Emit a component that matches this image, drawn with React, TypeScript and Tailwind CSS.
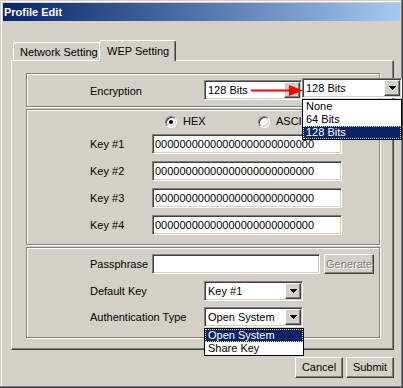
import React from "react";

const field =
  "bg-white border border-t-[#808080] border-l-[#808080] border-r-white border-b-white shadow-[inset_1px_1px_0_#404040,inset_-1px_-1px_0_#d4d0c8]";
const raised =
  "bg-[#d4d0c8] border border-t-white border-l-white border-r-[#404040] border-b-[#404040] shadow-[inset_-1px_-1px_0_#808080]";
const group =
  "border border-[#808080] shadow-[1px_1px_0_#fff,inset_1px_1px_0_#fff]";

function Arrow() {
  return (
    <svg width="7" height="4" viewBox="0 0 7 4" shapeRendering="crispEdges">
      <path d="M0 0h7v1H0z M1 1h5v1H1z M2 2h3v1H2z M3 3h1v1H3z" fill="#000" />
    </svg>
  );
}

function Select({ value, className }: { value: string; className: string }) {
  return (
    <div className={`${field} flex items-center h-[20px] ${className}`}>
      <span className="flex-1 pl-[3px] leading-none whitespace-nowrap">{value}</span>
      <div className={`${raised} w-[16px] h-[16px] mr-[1px] flex items-center justify-center`}>
        <Arrow />
      </div>
    </div>
  );
}

function Radio({ checked, label }: { checked?: boolean; label: string }) {
  return (
    <div className="flex items-center gap-[6px]">
      <div className="w-[12px] h-[12px] rounded-full bg-white border border-t-[#808080] border-l-[#808080] border-r-white border-b-white shadow-[inset_1px_1px_0_#404040,inset_-1px_-1px_0_#d4d0c8] flex items-center justify-center">
        {checked && <div className="w-[4px] h-[4px] rounded-full bg-black" />}
      </div>
      <span className="leading-none">{label}</span>
    </div>
  );
}

function ListItem({ text, active }: { text: string; active?: boolean }) {
  return (
    <div
      className={
        active
          ? "h-[13px] leading-[11px] pl-[2px] bg-[#0a246a] text-white border border-dotted border-[#e8e8a0]"
          : "h-[13px] leading-[13px] pl-[3px]"
      }
    >
      {text}
    </div>
  );
}

const keys = ["Key #1", "Key #2", "Key #3", "Key #4"];

export default function App() {
  return (
    <div className="relative w-[403px] h-[388px] bg-[#d4d0c8] flex flex-col font-['Liberation_Sans',Arial,sans-serif] text-[11px] text-black shadow-[inset_-1px_-1px_0_#404040,inset_-2px_-2px_0_#808080,inset_1px_1px_0_#d4d0c8,inset_2px_2px_0_#fff] overflow-hidden">
      {/* title bar */}
      <div className="mt-[3px] ml-[3px] w-[397px] h-[18px] bg-linear-to-r from-[#0a246a] to-[#a6caf0] flex items-center pl-[1px] text-white font-bold">
        Profile Edit
      </div>

      {/* tabs */}
      <div className="mt-[19px] ml-[13px] h-[21px] flex items-end">
        <div className="w-[87px] h-[18px] mb-[1px] border-t border-l border-white rounded-tl-[3px] flex items-center pl-[6px] pt-[1px] leading-none">
          Network Setting
        </div>
        <div className="relative z-10 -ml-[1px] w-[77px] h-[21px] bg-[#d4d0c8] border-t border-l border-white border-r border-r-[#404040] shadow-[inset_-1px_0_0_#808080] rounded-t-[3px] flex items-start pt-[5px] pl-[7px] leading-none">
          WEP Setting
        </div>
      </div>

      {/* panel */}
      <div className="-mt-[1px] ml-[11px] w-[383px] h-[290px] border border-t-white border-l-white border-r-[#404040] border-b-[#404040] shadow-[inset_-1px_-1px_0_#808080] pt-[12px] pl-[14px]">
        <div className={`${group} w-[354px] h-[34px] flex items-center pl-[63px]`}>
          <span className="w-[114px] leading-none pt-[3px]">Encryption</span>
          <Select value="128 Bits" className="w-[98px]" />
        </div>

        <div className={`${group} mt-[2px] w-[354px] h-[136px] pt-[4px]`}>
          <div className="h-[14px] flex items-center pl-[138px] pt-[1px]">
            <div className="w-[93px]">
              <Radio checked label="HEX" />
            </div>
            <Radio label="ASCII" />
          </div>
          <div className="mt-[6px] flex flex-col gap-[7px]">
            {keys.map((k) => (
              <div key={k} className="flex items-center pl-[63px] h-[20px]">
                <span className="w-[62px] leading-none">{k}</span>
                <div className={`${field} w-[190px] h-[20px] flex items-center pl-[2px] leading-none`}>
                  00000000000000000000000000
                </div>
              </div>
            ))}
          </div>
        </div>

        <div className={`${group} mt-[2px] w-[354px] h-[91px] pt-[6px] pl-[63px]`}>
          <div className="flex items-center h-[20px]">
            <span className="w-[62px] leading-none">Passphrase</span>
            <div className={`${field} w-[168px] h-[20px]`} />
            <div className={`${raised} ml-[4px] w-[50px] h-[20px] flex items-center justify-center text-[#808080] [text-shadow:1px_1px_0_#fff] leading-none`}>
              Generate
            </div>
          </div>
          <div className="mt-[7px] flex items-center h-[20px]">
            <span className="w-[114px] leading-none">Default Key</span>
            <Select value="Key #1" className="w-[99px]" />
          </div>
          <div className="mt-[6px] flex items-center h-[20px]">
            <span className="w-[114px] leading-none">Authentication Type</span>
            <Select value="Open System" className="w-[99px]" />
          </div>
        </div>
      </div>

      {/* buttons */}
      <div className="mt-[7px] pr-[9px] flex justify-end gap-[3px]">
        <div className={`${raised} w-[48px] h-[21px] flex items-center justify-center leading-none`}>Cancel</div>
        <div className={`${raised} w-[48px] h-[21px] flex items-center justify-center leading-none`}>Submit</div>
      </div>

      {/* open encryption dropdown */}
      <div className="absolute left-[302px] top-[78px] z-20">
        <Select value="128 Bits" className="w-[100px]" />
      </div>
      <div className="absolute left-[302px] top-[99px] z-20 w-[100px] h-[41px] bg-white border border-black">
        <ListItem text="None" />
        <ListItem text="64 Bits" />
        <ListItem text="128 Bits" active />
      </div>

      {/* red arrow */}
      <svg className="absolute left-[250px] top-[84px] z-30" width="54" height="13" viewBox="0 0 54 13">
        <line x1="1" y1="6.5" x2="41" y2="6.5" stroke="#f00" strokeWidth="2" />
        <polygon points="39,1 53,6.5 39,12" fill="#f00" />
      </svg>

      {/* open authentication dropdown */}
      <div className="absolute left-[204px] top-[328px] z-20 w-[100px] h-[28px] bg-white border border-black">
        <ListItem text="Open System" active />
        <ListItem text="Share Key" />
      </div>
    </div>
  );
}
